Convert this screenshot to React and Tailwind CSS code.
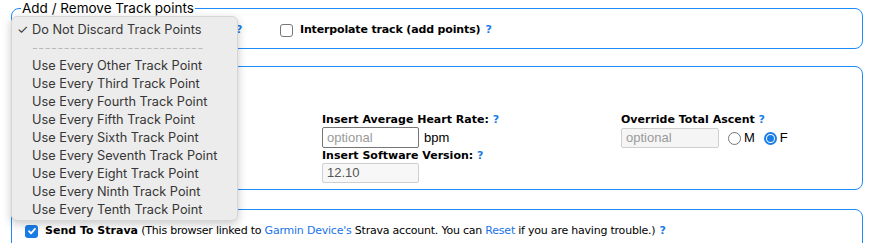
import React from 'react';

const Help = ( { className = '' } ) => (
    <span className={`font-bold text-[#1a7de6] ${className}`}>?</span>
);

const menuItems = [
    'Use Every Other Track Point',
    'Use Every Third Track Point',
    'Use Every Fourth Track Point',
    'Use Every Fifth Track Point',
    'Use Every Sixth Track Point',
    'Use Every Seventh Track Point',
    'Use Every Eight Track Point',
    'Use Every Ninth Track Point',
    'Use Every Tenth Track Point'
];

const App = () => {
    return (
        <div className="relative min-h-[243px] bg-white text-black overflow-hidden font-['DejaVu_Sans',Verdana,sans-serif] text-[11px]">
            <div className="ml-[11px] w-[852px]">
                {/* Track points */}
                <fieldset className="border border-[#1d8bf8] rounded-[8px] pt-[4px] pb-[8px]">
                    <legend className="ml-[9px] px-[1px] text-[13.5px] leading-[16px] font-['Inter',sans-serif] text-black">
                        Add / Remove Track points
                    </legend>
                    <div className="flex items-center h-[20px]">
                        <div className="w-[268px] flex items-center">
                            <div className="ml-[6px] w-[214px] h-[20px] border border-[#999] rounded-[4px] bg-white"></div>
                            <Help className="ml-[4px]" />
                        </div>
                        <span className="w-[13px] h-[13px] border border-[#767676] rounded-[3px] bg-white"></span>
                        <span className="ml-[7px] font-bold tracking-[-0.15px]">Interpolate track (add points)</span>
                        <Help className="ml-[5px]" />
                    </div>
                </fieldset>

                {/* Activity options */}
                <fieldset className="mt-[17px] border border-[#1d8bf8] rounded-[8px] pt-[46px] pb-[6px]">
                    <div className="grid grid-cols-[310px_299px_1fr]">
                        <div></div>
                        <div>
                            <div className="h-[14px] leading-[14px] font-bold">
                                Insert Average Heart Rate: <Help />
                            </div>
                            <div className="flex items-center h-[21px]">
                                <div className="w-[97px] h-[21px] border border-[#767676] rounded-[2px] bg-white px-[4px] flex items-center font-['Liberation_Sans',Arial,sans-serif] text-[13px] text-[#9a9a9a]">
                                    optional
                                </div>
                                <span className="ml-[5px] font-['Liberation_Sans',Arial,sans-serif] text-[13px]">bpm</span>
                            </div>
                            <div className="mt-[1px] h-[14px] leading-[14px] font-bold">
                                Insert Software Version: <Help />
                            </div>
                            <div className="w-[97px] h-[20px] border border-[#cfcfcf] rounded-[2px] bg-[#f7f7f7] px-[4px] flex items-center font-['Liberation_Sans',Arial,sans-serif] text-[13px] text-[#555]">
                                12.10
                            </div>
                        </div>
                        <div>
                            <div className="h-[14px] leading-[14px] font-bold">
                                Override Total Ascent <Help />
                            </div>
                            <div className="mt-[1px] flex items-center h-[20px] font-['Liberation_Sans',Arial,sans-serif] text-[13px]">
                                <div className="w-[98px] h-[20px] border border-[#cfcfcf] rounded-[2px] bg-[#f5f5f5] px-[4px] flex items-center text-[#9a9a9a]">
                                    optional
                                </div>
                                <span className="ml-[9px] w-[13px] h-[13px] rounded-full border border-[#767676] bg-white"></span>
                                <span className="ml-[3px]">M</span>
                                <span className="ml-[9px] w-[13px] h-[13px] rounded-full border-2 border-[#1a7de6] bg-white flex items-center justify-center">
                                    <span className="w-[7px] h-[7px] rounded-full bg-[#1a7de6]"></span>
                                </span>
                                <span className="ml-[3px]">F</span>
                            </div>
                        </div>
                    </div>
                </fieldset>

                {/* Strava */}
                <fieldset className="mt-[19px] border border-[#1d8bf8] rounded-[8px] pt-[12px] pl-[13px] pb-[10px]">
                    <div className="flex items-center h-[18px] whitespace-nowrap">
                        <span className="w-[13px] h-[13px] rounded-[3px] bg-[#1a7de6] flex items-center justify-center">
                            <svg width="10" height="10" viewBox="0 0 10 10" fill="none">
                                <path d="M2 5.2l2 2.1L8 2.8" stroke="white" strokeWidth="1.8" strokeLinecap="round" strokeLinejoin="round" />
                            </svg>
                        </span>
                        <span className="ml-[7px] font-bold">Send To Strava</span>
                        <span className="tracking-[-0.22px]">&nbsp;(This browser linked to <span className="text-[#1a73e8]">Garmin Device's</span> Strava account. You can <span className="text-[#1a73e8]">Reset</span> if you are having trouble.)</span>
                        <Help className="ml-[4px]" />
                    </div>
                    <div className="flex items-center h-[18px]">
                        <span className="w-[13px] h-[13px] border border-[#767676] rounded-[3px] bg-white"></span>
                    </div>
                </fieldset>
            </div>

            {/* Open select menu */}
            <div className="absolute left-[11px] top-[16px] w-[227px] h-[205px] rounded-[6px] bg-[#ececec] border border-[#d6d6d6] shadow-[0_3px_10px_rgba(0,0,0,0.22)] pt-[4px] font-['Inter',sans-serif] text-[12.75px] text-[#363636]">
                <div className="relative h-[18px] leading-[18px] pl-[20px]">
                    <span className="absolute left-[5px] top-0">✓</span>
                    Do Not Discard Track Points
                </div>
                <div className="h-[18px] leading-[18px] pl-[20px] text-[#b8b8b8] tracking-[0.5px] whitespace-nowrap">
                    ---------------------------
                </div>
                {menuItems.map( item => (
                    <div key={item} className="h-[18px] leading-[18px] pl-[20px] whitespace-nowrap">
                        {item}
                    </div>
                ) )}
            </div>
        </div>
    );
};

export default App;
